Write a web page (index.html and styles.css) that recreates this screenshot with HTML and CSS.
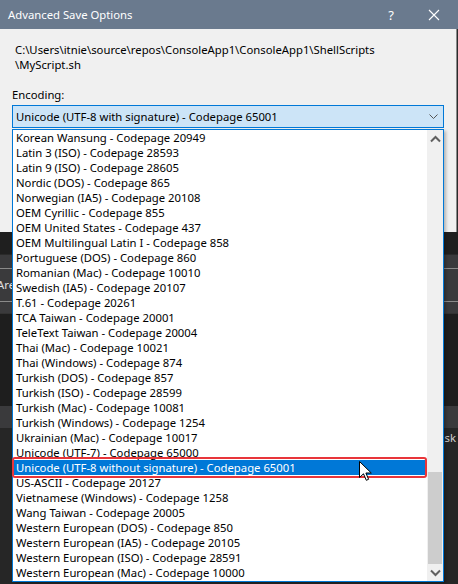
FILE: index.html
```html
<!DOCTYPE html>
<html>
<head>
<meta charset="utf-8">
<link rel="stylesheet" href="styles.css">
</head>
<body>
<div class="dialog">
  <div class="titlebar">
    <span class="title">Advanced Save Options</span>
    <span class="tb-btns"><span class="help">?</span>
      <svg class="close" width="12" height="12" viewBox="0 0 12 12"><path d="M1 1L11 11M11 1L1 11" stroke="#fff" stroke-width="1.1" fill="none"/></svg>
    </span>
  </div>
  <div class="dlg-body">
    <div class="path">C:\Users\itnie\source\repos\ConsoleApp1\ConsoleApp1\ShellScripts<br>\MyScript.sh</div>
    <div class="label">Encoding:</div>
    <div class="combo">
      <span>Unicode (UTF-8 with signature) - Codepage 65001</span>
      <svg width="9" height="6" viewBox="0 0 9 6"><path d="M0.5 0.5L4.5 4.5L8.5 0.5" stroke="#555" stroke-width="1" fill="none"/></svg>
    </div>
  </div>
</div>
<div class="backdrop">
  <div class="bd dark1"></div>
  <div class="bd band1"><span class="bd-text">Are</span></div>
  <div class="bd dark2"></div>
  <div class="bd band2"></div>
  <div class="bd dark3"><span class="bd-text2">sk</span></div>
</div>

<div class="dropdown">
  <div class="items">
    <div class="item">Korean Wansung - Codepage 20949</div>
    <div class="item">Latin 3 (ISO) - Codepage 28593</div>
    <div class="item">Latin 9 (ISO) - Codepage 28605</div>
    <div class="item">Nordic (DOS) - Codepage 865</div>
    <div class="item">Norwegian (IA5) - Codepage 20108</div>
    <div class="item">OEM Cyrillic - Codepage 855</div>
    <div class="item">OEM United States - Codepage 437</div>
    <div class="item">OEM Multilingual Latin I - Codepage 858</div>
    <div class="item">Portuguese (DOS) - Codepage 860</div>
    <div class="item">Romanian (Mac) - Codepage 10010</div>
    <div class="item">Swedish (IA5) - Codepage 20107</div>
    <div class="item">T.61 - Codepage 20261</div>
    <div class="item">TCA Taiwan - Codepage 20001</div>
    <div class="item">TeleText Taiwan - Codepage 20004</div>
    <div class="item">Thai (Mac) - Codepage 10021</div>
    <div class="item">Thai (Windows) - Codepage 874</div>
    <div class="item">Turkish (DOS) - Codepage 857</div>
    <div class="item">Turkish (ISO) - Codepage 28599</div>
    <div class="item">Turkish (Mac) - Codepage 10081</div>
    <div class="item">Turkish (Windows) - Codepage 1254</div>
    <div class="item">Ukrainian (Mac) - Codepage 10017</div>
    <div class="item">Unicode (UTF-7) - Codepage 65000</div>
    <div class="item selected">Unicode (UTF-8 without signature) - Codepage 65001
      <svg class="cursor" width="14" height="21" viewBox="0 0 14 21"><path d="M0.5 0.5V16.5L4.5 12.8L7.3 19.3L9.6 18.3L6.9 12H12.3Z" fill="#fff" stroke="#000" stroke-width="1" stroke-linejoin="miter"/></svg>
    </div>
    <div class="item">US-ASCII - Codepage 20127</div>
    <div class="item">Vietnamese (Windows) - Codepage 1258</div>
    <div class="item">Wang Taiwan - Codepage 20005</div>
    <div class="item">Western European (DOS) - Codepage 850</div>
    <div class="item">Western European (IA5) - Codepage 20105</div>
    <div class="item">Western European (ISO) - Codepage 28591</div>
    <div class="item">Western European (Mac) - Codepage 10000</div>
  </div>
  <div class="scrollbar">
    <svg class="arrow" width="11" height="8" viewBox="0 0 11 8"><path d="M1 6.5L5.5 2L10 6.5" stroke="#606060" stroke-width="2" fill="none"/></svg>
    <div class="track"><div class="thumb"></div></div>
    <svg class="arrow" width="11" height="8" viewBox="0 0 11 8"><path d="M1 1.5L5.5 6L10 1.5" stroke="#606060" stroke-width="2" fill="none"/></svg>
  </div>
</div>
</body>
</html>
```

FILE: styles.css
```css
html, body {
  margin: 0;
  padding: 0;
}
body {
  width: 458px;
  height: 584px;
  overflow: hidden;
  background: #2b2b2b;
  font-family: "Noto Sans", "Open Sans", sans-serif;
  font-size: 11.3px;
  position: relative;
}
.dialog {
  width: 457px;
  height: 232px;
  background: #f0f0f0;
  border-right: 1px solid #8a8a8a;
  box-sizing: border-box;
  display: flex;
  flex-direction: column;
}
.titlebar {
  height: 29px;
  background: #6a7a8e;
  color: #fff;
  display: flex;
  align-items: center;
  justify-content: space-between;
  padding: 0 0 0 8px;
  width: 458px;
  box-sizing: border-box;
}
.title {
  font-size: 11.3px;
}
.tb-btns {
  display: flex;
  align-items: center;
}
.help {
  font-size: 13px;
  margin-right: 34px;
}
.close {
  margin-right: 18px;
}
.dlg-body {
  padding: 13px 12px 0 12px;
}
.path {
  padding-left: 3px;
  line-height: 15px;
  color: #000;
}
.label {
  margin-top: 15px;
  line-height: 15px;
  color: #000;
}
.combo {
  margin-top: 3px;
  height: 23px;
  width: 432px;
  box-sizing: border-box;
  border: 1px solid #0078d7;
  background: #cce4f7;
  display: flex;
  align-items: center;
  justify-content: space-between;
  padding: 0 5px 0 3px;
  color: #000;
}
.backdrop {
  display: flex;
  flex-direction: column;
  height: 352px;
}
.bd { width: 100%; position: relative; overflow: hidden; }
.dark1 { height: 22px; background: #1f1f1f; }
.band1 {
  height: 58px;
  background: #3a3a3c;
  border-top: 1px solid #2a2a2a;
}
.band1::before {
  content: "";
  position: absolute;
  left: 0; right: 0; top: 13px;
  border-top: 1px solid #8a8a8a;
}
.band1::after {
  content: "";
  position: absolute;
  left: 0; right: 0; top: 46px;
  border-top: 1px solid #8a8a8a;
}
.bd-text {
  position: absolute;
  left: -3px;
  top: 22px;
  color: #e0e0e0;
}
.dark2 { height: 92px; background: #1e1e1e; border-top: 1px solid #333; }
.band2 { height: 22px; background: #3a3a3c; }
.dark3 { flex: 1; background: #262626; }
.bd-text2 {
  position: absolute;
  right: 2px;
  top: 2px;
  color: #d0d0d0;
}

.dropdown {
  position: absolute;
  left: 12px;
  top: 129px;
  width: 432px;
  height: 453px;
  box-sizing: border-box;
  border: 1px solid #0078d7;
  background: #fff;
  display: flex;
  box-shadow: 2px 2px 3px rgba(0,0,0,0.25);
}
.items {
  flex: 1;
  padding-top: 0;
}
.item {
  height: 15px;
  line-height: 15px;
  padding-left: 3px;
  color: #000;
  white-space: nowrap;
  position: relative;
}
.item.selected {
  background: #0078d7;
  color: #fff;
}
.item.selected::before {
  content: "";
  position: absolute;
  left: -1px;
  right: 0;
  top: -3px;
  bottom: -3px;
  border: 2px solid #e8353a;
  border-radius: 3px;
}
.cursor {
  position: absolute;
  left: 346px;
  top: 1px;
}
.scrollbar {
  width: 16px;
  background: #f0f0f0;
  display: flex;
  flex-direction: column;
  align-items: center;
}
.arrow {
  margin: 5px 0 4px;
  flex: none;
}
.track {
  flex: 1;
  width: 100%;
  display: flex;
  flex-direction: column;
  justify-content: flex-end;
  padding: 0 1px;
  box-sizing: border-box;
}
.thumb {
  height: 92px;
  background: #cdcdcd;
}
```
